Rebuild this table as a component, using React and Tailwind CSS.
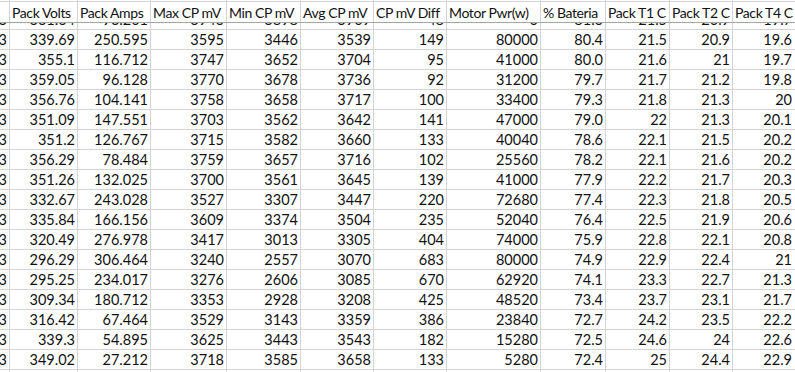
import React from "react";

const widths = [
  "w-[10px]",
  "w-[68px]",
  "w-[73px]",
  "w-[76px]",
  "w-[74px]",
  "w-[73px]",
  "w-[73px]",
  "w-[94px]",
  "w-[65px]",
  "w-[64px]",
  "w-[63px]",
  "w-[64px]",
];

const headers = [
  "",
  "Pack Volts",
  "Pack Amps",
  "Max CP mV",
  "Min CP mV",
  "Avg CP mV",
  "CP mV Diff",
  "Motor Pwr(w)",
  "% Bateria",
  "Pack T1 C",
  "Pack T2 C",
  "Pack T4 C",
];

const partial = ["13", "331.64", "93.201", "3946", "3898", "3909", "48", "0", "81.6", "21.5", "20.9", "19.7"];

const rows = [
  ["339.69", "250.595", "3595", "3446", "3539", "149", "80000", "80.4", "21.5", "20.9", "19.6"],
  ["355.1", "116.712", "3747", "3652", "3704", "95", "41000", "80.0", "21.6", "21", "19.7"],
  ["359.05", "96.128", "3770", "3678", "3736", "92", "31200", "79.7", "21.7", "21.2", "19.8"],
  ["356.76", "104.141", "3758", "3658", "3717", "100", "33400", "79.3", "21.8", "21.3", "20"],
  ["351.09", "147.551", "3703", "3562", "3642", "141", "47000", "79.0", "22", "21.3", "20.1"],
  ["351.2", "126.767", "3715", "3582", "3660", "133", "40040", "78.6", "22.1", "21.5", "20.2"],
  ["356.29", "78.484", "3759", "3657", "3716", "102", "25560", "78.2", "22.1", "21.6", "20.2"],
  ["351.26", "132.025", "3700", "3561", "3645", "139", "41000", "77.9", "22.2", "21.7", "20.3"],
  ["332.67", "243.028", "3527", "3307", "3447", "220", "72680", "77.4", "22.3", "21.8", "20.5"],
  ["335.84", "166.156", "3609", "3374", "3504", "235", "52040", "76.4", "22.5", "21.9", "20.6"],
  ["320.49", "276.978", "3417", "3013", "3305", "404", "74000", "75.9", "22.8", "22.1", "20.8"],
  ["296.29", "306.464", "3240", "2557", "3070", "683", "80000", "74.9", "22.9", "22.4", "21"],
  ["295.25", "234.017", "3276", "2606", "3085", "670", "62920", "74.1", "23.3", "22.7", "21.3"],
  ["309.34", "180.712", "3353", "2928", "3208", "425", "48520", "73.4", "23.7", "23.1", "21.7"],
  ["316.42", "67.464", "3529", "3143", "3359", "386", "23840", "72.7", "24.2", "23.5", "22.2"],
  ["339.3", "54.895", "3625", "3443", "3543", "182", "15280", "72.5", "24.6", "24", "22.6"],
  ["349.02", "27.212", "3718", "3585", "3658", "133", "5280", "72.4", "25", "24.4", "22.9"],
];

function Row({ cells, height, shift, header, last }) {
  return (
    <div className={`flex ${last ? "" : header ? "border-b border-[#a6a6a6]" : "border-b border-[#d4d4d4]"}`}>
      {widths.map((w, i) => (
        <div key={i} className={`${w} ${height} shrink-0 overflow-hidden border-r border-[#d4d4d4]`}>
          <div
            className={`${shift} h-[19px] leading-[19px] whitespace-nowrap flex ${
              header ? "justify-start pl-[2px] tracking-[-0.4px] text-[14px]" : "justify-end pr-[2px]"
            } ${i === 11 ? "pr-[4px]" : ""}`}
          >
            {cells[i] ?? ""}
          </div>
        </div>
      ))}
    </div>
  );
}

export default function App() {
  return (
    <div className="w-[795px] h-[372px] overflow-hidden bg-white text-[#111] text-[14.5px] [font-family:Lato,sans-serif]">
      <Row cells={[]} height="h-[1px]" shift="" />
      <Row cells={headers} height="h-[20px]" shift="mt-[1px]" header />
      <Row cells={partial} height="h-[6px]" shift="mt-[-13px]" />
      {rows.map((r, i) => (
        <Row key={i} cells={["3", ...r]} height="h-[19px]" shift="" />
      ))}
      <Row cells={[]} height="h-[4px]" shift="" last />
    </div>
  );
}
